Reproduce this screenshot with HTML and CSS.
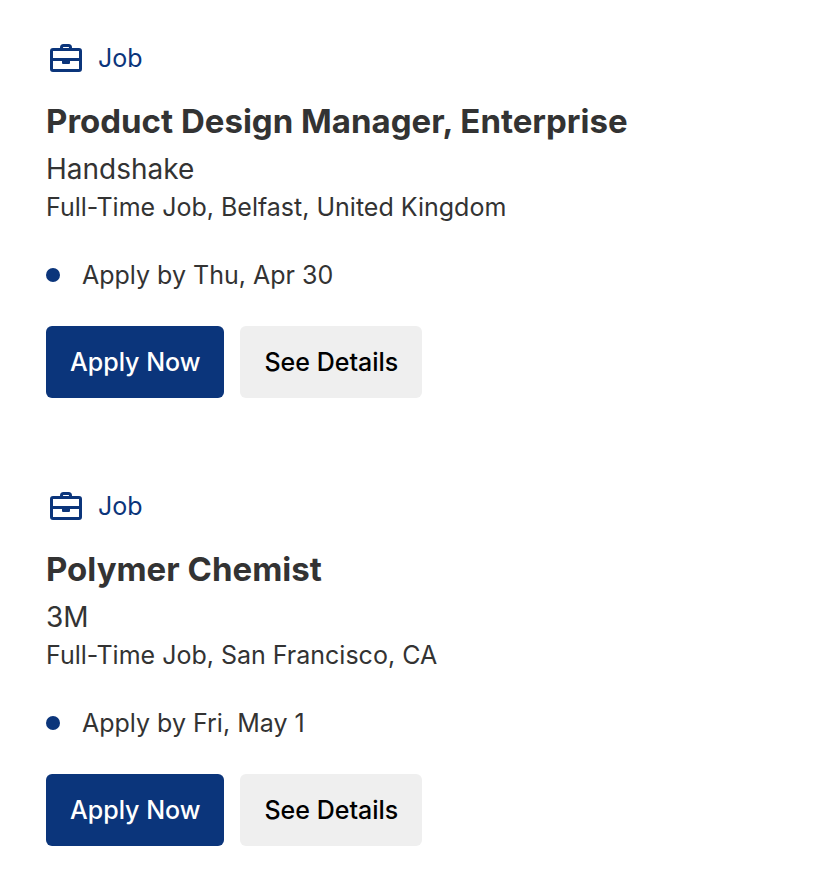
FILE: index.html
```html
<!DOCTYPE html>
<html lang="en">
<head>
  <meta charset="UTF-8">
  <meta name="viewport" content="width=device-width, initial-scale=1.0">
  <title>Jobs</title>
  <link rel="stylesheet" href="styles.css">
</head>
<body>

  <main class="job-list">
    <article class="job">
      <div class="job-type">
        <svg class="icon" viewBox="0 0 40 36" aria-hidden="true">
          <path d="M15.5 9V7.5Q15.5 5.5 17.5 5.5H22.5Q24.5 5.5 24.5 7.5V9" fill="none" stroke="currentColor" stroke-width="3"/>
          <rect x="5.5" y="9.5" width="29" height="21" rx="1.5" fill="none" stroke="currentColor" stroke-width="3"/>
          <path d="M5 18H35V21H24V23Q24 24 23 24H17Q16 24 16 23V21H5Z" fill="currentColor"/>
        </svg>
        <span>Job</span>
      </div>
      <h2>Product Design Manager, Enterprise</h2>
      <p class="company">Handshake</p>
      <p class="location">Full-Time Job, Belfast, United Kingdom</p>
      <p class="deadline">Apply by Thu, Apr 30</p>
      <div class="actions">
        <button class="btn btn-primary" type="button">Apply Now</button>
        <button class="btn" type="button">See Details</button>
      </div>
    </article>

    <article class="job">
      <div class="job-type">
        <svg class="icon" viewBox="0 0 40 36" aria-hidden="true">
          <path d="M15.5 9V7.5Q15.5 5.5 17.5 5.5H22.5Q24.5 5.5 24.5 7.5V9" fill="none" stroke="currentColor" stroke-width="3"/>
          <rect x="5.5" y="9.5" width="29" height="21" rx="1.5" fill="none" stroke="currentColor" stroke-width="3"/>
          <path d="M5 18H35V21H24V23Q24 24 23 24H17Q16 24 16 23V21H5Z" fill="currentColor"/>
        </svg>
        <span>Job</span>
      </div>
      <h2>Polymer Chemist</h2>
      <p class="company">3M</p>
      <p class="location">Full-Time Job, San Francisco, CA</p>
      <p class="deadline">Apply by Fri, May 1</p>
      <div class="actions">
        <button class="btn btn-primary" type="button">Apply Now</button>
        <button class="btn" type="button">See Details</button>
      </div>
    </article>
  </main>

</body>
</html>
```
FILE: styles.css
```css
body {
  margin: 0;
  font-family: Inter, "Liberation Sans", sans-serif;
  font-size: 25px;
  line-height: 36px;
  background: #fff;
  color: #333;
}

.job-list {
  display: flex;
  flex-direction: column;
  gap: 90px;
  padding: 40px 46px;
}

.job-type {
  display: flex;
  align-items: center;
  gap: 12px;
  color: #0b357b;
}

.icon {
  width: 40px;
  height: 36px;
}

h2 {
  margin: 24px 0 8px;
  font-size: 33px;
  line-height: 42px;
  font-weight: 700;
}

p {
  margin: 0;
}

.company,
.location {
  line-height: 38px;
}

.company {
  font-size: 28px;
}

.deadline {
  display: flex;
  align-items: center;
  gap: 22px;
  margin: 31px 0 33px;
}

.deadline::before {
  content: "";
  width: 14px;
  height: 14px;
  border-radius: 50%;
  background: #0b357b;
}

.actions {
  display: flex;
  flex-wrap: wrap;
  gap: 16px;
}

.btn {
  padding: 18px 24px;
  border: none;
  border-radius: 6px;
  background: #efefef;
  color: #000;
  font: inherit;
  font-weight: 500;
  cursor: pointer;
}

.btn-primary {
  background: #0b357b;
  color: #fff;
}
```
